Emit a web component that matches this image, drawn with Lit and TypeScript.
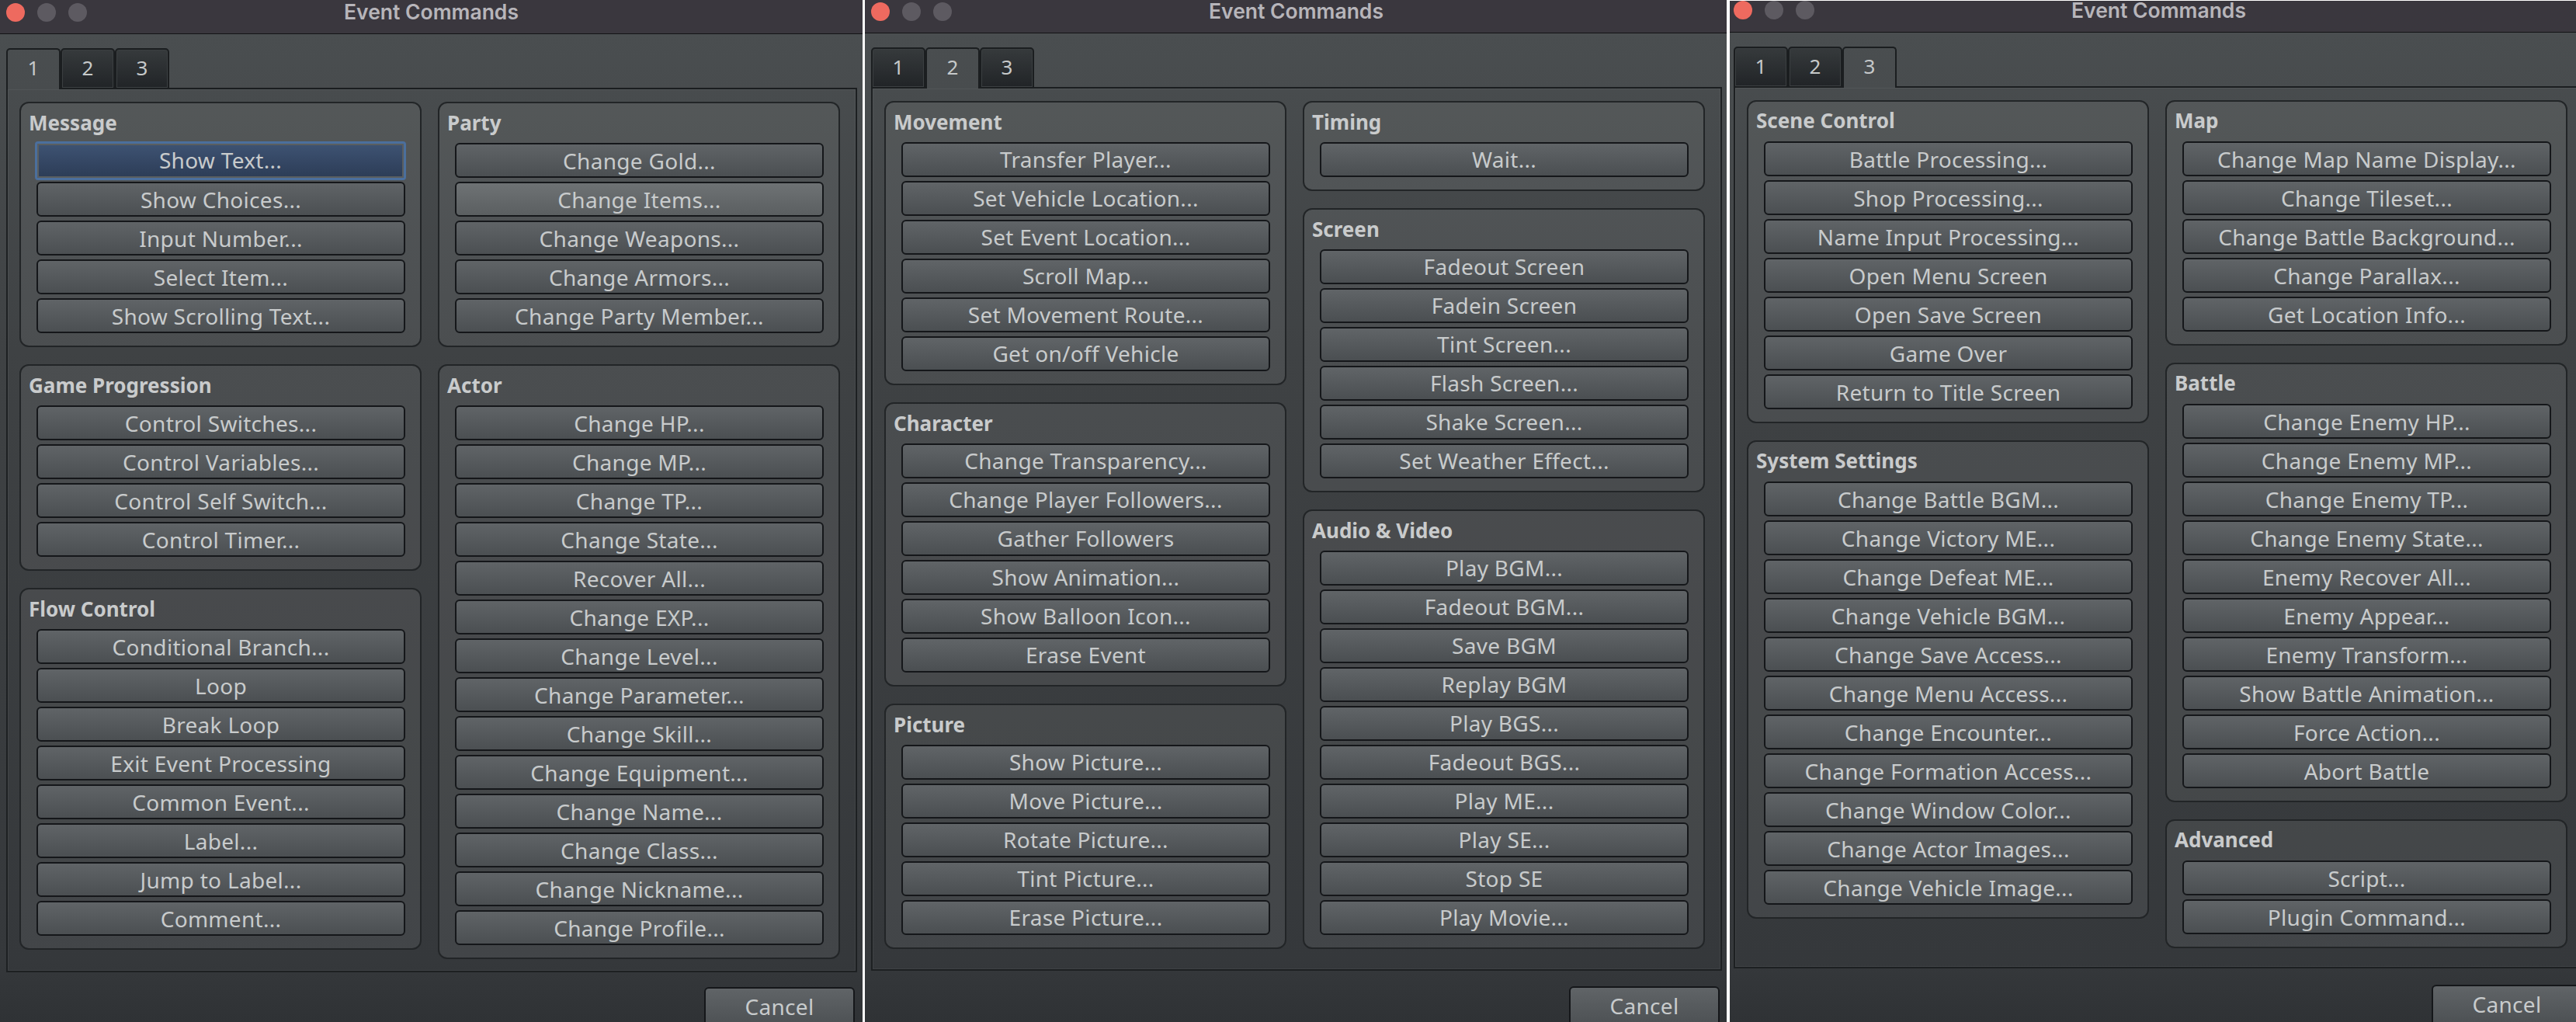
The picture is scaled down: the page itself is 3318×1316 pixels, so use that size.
import { LitElement, html, css } from "lit";
import { customElement } from "lit/decorators.js";

type Group = { t: string; b: string[] };
type Win = { cols: Group[][]; active: number; cls: string };

const d: Win[] = [
  {
    active: 1,
    cls: "w1",
    cols: [
      [
        { t: "Message", b: ["Show Text...", "Show Choices...", "Input Number...", "Select Item...", "Show Scrolling Text..."] },
        { t: "Game Progression", b: ["Control Switches...", "Control Variables...", "Control Self Switch...", "Control Timer..."] },
        { t: "Flow Control", b: ["Conditional Branch...", "Loop", "Break Loop", "Exit Event Processing", "Common Event...", "Label...", "Jump to Label...", "Comment..."] },
      ],
      [
        { t: "Party", b: ["Change Gold...", "Change Items...", "Change Weapons...", "Change Armors...", "Change Party Member..."] },
        { t: "Actor", b: ["Change HP...", "Change MP...", "Change TP...", "Change State...", "Recover All...", "Change EXP...", "Change Level...", "Change Parameter...", "Change Skill...", "Change Equipment...", "Change Name...", "Change Class...", "Change Nickname...", "Change Profile..."] },
      ],
    ],
  },
  {
    active: 2,
    cls: "w2",
    cols: [
      [
        { t: "Movement", b: ["Transfer Player...", "Set Vehicle Location...", "Set Event Location...", "Scroll Map...", "Set Movement Route...", "Get on/off Vehicle"] },
        { t: "Character", b: ["Change Transparency...", "Change Player Followers...", "Gather Followers", "Show Animation...", "Show Balloon Icon...", "Erase Event"] },
        { t: "Picture", b: ["Show Picture...", "Move Picture...", "Rotate Picture...", "Tint Picture...", "Erase Picture..."] },
      ],
      [
        { t: "Timing", b: ["Wait..."] },
        { t: "Screen", b: ["Fadeout Screen", "Fadein Screen", "Tint Screen...", "Flash Screen...", "Shake Screen...", "Set Weather Effect..."] },
        { t: "Audio & Video", b: ["Play BGM...", "Fadeout BGM...", "Save BGM", "Replay BGM", "Play BGS...", "Fadeout BGS...", "Play ME...", "Play SE...", "Stop SE", "Play Movie..."] },
      ],
    ],
  },
  {
    active: 3,
    cls: "w3",
    cols: [
      [
        { t: "Scene Control", b: ["Battle Processing...", "Shop Processing...", "Name Input Processing...", "Open Menu Screen", "Open Save Screen", "Game Over", "Return to Title Screen"] },
        { t: "System Settings", b: ["Change Battle BGM...", "Change Victory ME...", "Change Defeat ME...", "Change Vehicle BGM...", "Change Save Access...", "Change Menu Access...", "Change Encounter...", "Change Formation Access...", "Change Window Color...", "Change Actor Images...", "Change Vehicle Image..."] },
      ],
      [
        { t: "Map", b: ["Change Map Name Display...", "Change Tileset...", "Change Battle Background...", "Change Parallax...", "Get Location Info..."] },
        { t: "Battle", b: ["Change Enemy HP...", "Change Enemy MP...", "Change Enemy TP...", "Change Enemy State...", "Enemy Recover All...", "Enemy Appear...", "Enemy Transform...", "Show Battle Animation...", "Force Action...", "Abort Battle"] },
        { t: "Advanced", b: ["Script...", "Plugin Command..."] },
      ],
    ],
  },
];

@customElement("app-root")
export class AppRoot extends LitElement {
  static styles = css`
    :host {
      display: flex;
      width: 3318px;
      height: 1316px;
      background: #fff;
      overflow: hidden;
      font-family: "Noto Sans", sans-serif;
    }
    .window { overflow: hidden; height: 1316px; flex: none; }
    .w1 { width: 1111px; margin-right: 2px; --ml: 0px; --titleh: 44px; --tp: 3px; --dt: 4px; --panel: 1137px; --cancel: 19px; --gtp: 10px; --lh: 43px; }
    .w2 { width: 1111px; margin-right: 4px; --ml: 1px; --titleh: 43px; --tp: 2px; --dt: 3px; --panel: 1136px; --cancel: 20px; --gtp: 10px; --lh: 41px; }
    .w3 { width: 1090px; --ml: -3px; --titleh: 41px; --tp: 0px; --dt: 0px; --panel: 1134px; --cancel: 21px; --gtp: 9px; --lh: 43px; border-top: 1px solid #fff; height: 1315px; }
    .inner {
      width: 1111px;
      height: 1330px;
      margin-left: var(--ml);
      display: flex;
      flex-direction: column;
      background: linear-gradient(#4a4e50 44px, #3f4244 450px, #35383b 1240px, #2f3235 1316px);
    }
    .title {
      height: var(--titleh);
      flex: none;
      box-sizing: border-box;
      border-bottom: 1px solid #131315;
      background: #3a373e;
      display: flex;
      align-items: flex-start;
      position: relative;
      justify-content: center;
      padding-top: var(--tp);
      font: 600 26.5px/24px Inter, sans-serif;
      color: #b7b5ba;
    }
    .dots { position: absolute; left: 8px; top: var(--dt); display: flex; gap: 16px; }
    .dot { width: 24px; height: 24px; border-radius: 50%; background: #5d5a61; }
    .dot.red { background: #ee6a5f; }
    .tabs { display: flex; margin: 18px 7px 0 8px; height: 53px; flex: none; }
    .tab {
      width: 70px;
      box-sizing: border-box;
      border: 2px solid #1b1e20;
      border-radius: 5px 5px 0 0;
      font-size: 26px;
      color: #c6c9ca;
      display: flex;
      align-items: center;
      justify-content: center;
      padding-bottom: 3px;
      background: linear-gradient(#363a3c, #212427);
      box-shadow: inset 0 0 0 1px #3b3f41;
    }
    .tab.on { background: none; border-bottom: none; box-shadow: none; padding-bottom: 5px; }
    .fill { flex: 1; border-bottom: 2px solid #1b1e20; }
    .panel {
      margin: 0 7px 0 8px;
      height: var(--panel);
      flex: none;
      box-sizing: border-box;
      border: 2px solid #1d2022;
      border-top: none;
      box-shadow: inset 0 0 0 1px rgba(255, 255, 255, 0.05);
      padding: 16px 0 0 15px;
      display: flex;
      gap: 21px;
      align-items: flex-start;
    }
    .col { width: 518px; display: flex; flex-direction: column; gap: 22px; }
    .group {
      box-sizing: border-box;
      border: 2px solid #222527;
      border-radius: 12px;
      background: rgba(255, 255, 255, 0.065);
      padding: 0 19px 16px 20px;
    }
    .gt {
      height: 51px;
      box-sizing: border-box;
      margin-left: -10px;
      font-weight: 700;
      font-size: 26px;
      line-height: 30px;
      padding-top: var(--gtp);
      color: #c9cbcc;
    }
    .btns { display: flex; flex-direction: column; gap: 5px; }
    .btn {
      height: 45px;
      box-sizing: border-box;
      border: 2px solid #15171a;
      border-radius: 6px;
      background: linear-gradient(#606467, #4b4f52);
      color: #c8cbcc;
      font-size: 28px;
      line-height: var(--lh);
      letter-spacing: 0.3px;
      text-align: center;
      white-space: nowrap;
    }
    .btn.hover { background: linear-gradient(#6e7274, #5b5f61); }
    .btn.focus {
      height: 50px;
      margin: -2px -1px -3px -2px;
      border: 3px solid #4b6f9d;
      background: linear-gradient(#3e5373, #2c3c56);
      box-shadow: inset 0 0 0 2px #5a5e60;
      border-radius: 4px;
    }
    .foot { display: flex; justify-content: flex-end; padding: var(--cancel) 10px 0 0; }
    .cancel { width: 194px; height: 56px; line-height: 46px; }
  `;

  render() {
    return d.map(
      (w) => html`<div class="window ${w.cls}">
        <div class="inner">
          <div class="title">
            <div class="dots"><i class="dot red"></i><i class="dot"></i><i class="dot"></i></div>
            Event Commands
          </div>
          <div class="tabs">
            ${[1, 2, 3].map((n) => html`<div class="tab ${n === w.active ? "on" : ""}">${n}</div>`)}
            <div class="fill"></div>
          </div>
          <div class="panel">
            ${w.cols.map(
              (c) => html`<div class="col">
                ${c.map(
                  (g) => html`<div class="group">
                    <div class="gt">${g.t}</div>
                    <div class="btns">
                      ${g.b.map(
                        (b) => html`<div class="btn ${b === "Show Text..." ? "focus" : ""} ${b === "Change Items..." ? "hover" : ""}">${b}</div>`
                      )}
                    </div>
                  </div>`
                )}
              </div>`
            )}
          </div>
          <div class="foot"><div class="btn cancel">Cancel</div></div>
        </div>
      </div>`
    );
  }
}
